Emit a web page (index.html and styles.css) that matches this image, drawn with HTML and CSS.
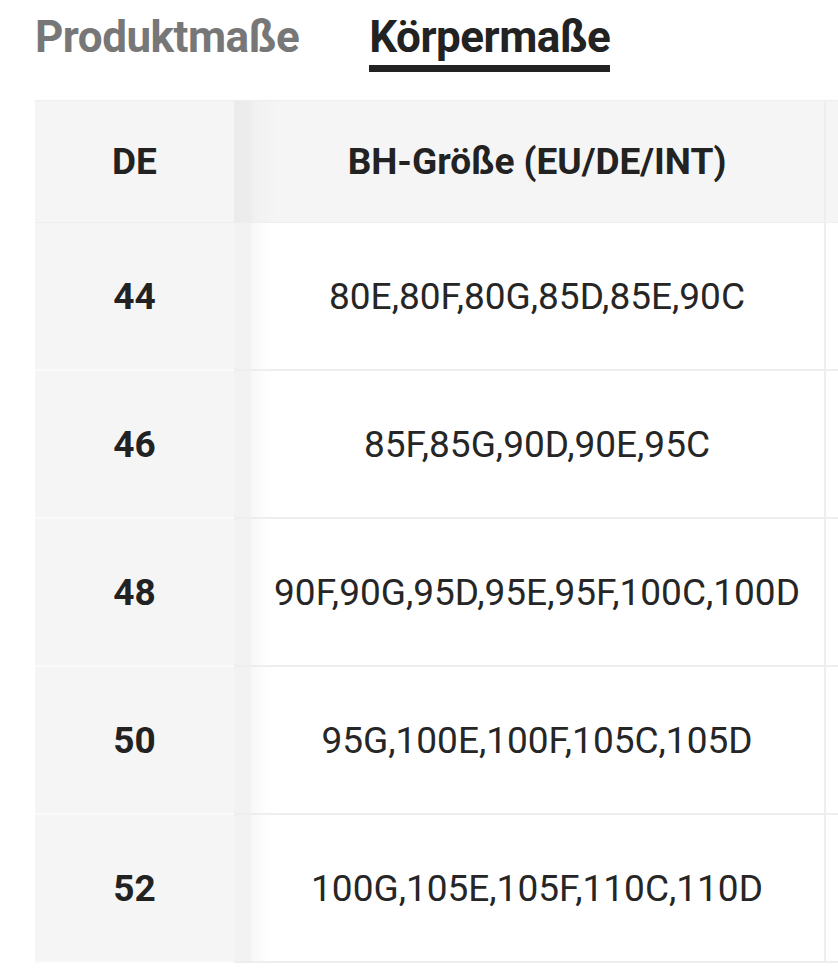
FILE: index.html
```html
<!DOCTYPE html>
<html lang="de">
<head>
<meta charset="utf-8">
<link rel="stylesheet" href="styles.css">
</head>
<body>
<div class="tabs">
  <div class="tab">Produktmaße</div>
  <div class="tab active">Körpermaße</div>
</div>
<div class="table">
  <div class="row head">
    <div class="c1">DE</div>
    <div class="c2">BH-Größe (EU/DE/INT)</div>
    <div class="c3"></div>
  </div>
  <div class="row">
    <div class="c1">44</div>
    <div class="c2">80E,80F,80G,85D,85E,90C</div>
    <div class="c3"></div>
  </div>
  <div class="row">
    <div class="c1">46</div>
    <div class="c2">85F,85G,90D,90E,95C</div>
    <div class="c3"></div>
  </div>
  <div class="row">
    <div class="c1">48</div>
    <div class="c2">90F,90G,95D,95E,95F,100C,100D</div>
    <div class="c3"></div>
  </div>
  <div class="row">
    <div class="c1">50</div>
    <div class="c2">95G,100E,100F,105C,105D</div>
    <div class="c3"></div>
  </div>
  <div class="row">
    <div class="c1">52</div>
    <div class="c2">100G,105E,105F,110C,110D</div>
    <div class="c3"></div>
  </div>
</div>
</body>
</html>
```
FILE: styles.css
```css
html, body {
  margin: 0;
  padding: 0;
  background: #fff;
  overflow: hidden;
}
body {
  font-family: Roboto, "Liberation Sans", sans-serif;
  color: #222;
}
.tabs {
  display: flex;
  gap: 70px;
  padding-left: 35px;
  height: 100px;
}
.tab {
  font-weight: 700;
  font-size: 44px;
  line-height: 60px;
  padding-top: 7px;
  height: 60px;
  color: #777;
  letter-spacing: -0.5px;
}
.tab.active {
  color: #222;
  box-sizing: border-box;
  border-bottom: 7px solid #222;
  height: 72px;
}
.table {
  margin-left: 35px;
  width: calc(100% - 35px);
  overflow: hidden;
  border-top: 1px solid #eee;
}
.row {
  display: grid;
  grid-template-columns: 199px 592px 110px;
  height: 148px;
  font-size: 37px;
}
.row.head {
  height: 122px;
  font-weight: 700;
}
.row > div {
  display: flex;
  align-items: center;
  justify-content: center;
  white-space: nowrap;
}
.c1 {
  background: #f5f5f5;
  font-weight: 700;
  border-bottom: 2px solid #fafafa;
}
.c2 {
  padding-left: 16px;
  color: #262626;
  background: linear-gradient(to right, #f2f2f2 0, #f2f2f2 16px, #f8f8f8 18px, #fdfdfd 30px, #fff 42px);
  border-bottom: 2px solid #eee;
  border-right: 2px solid #eee;
}
.c3 {
  background: #fff;
  border-bottom: 2px solid #eee;
}
.head .c1 {
  background: #f5f5f5;
  border-bottom: 1px solid #eee;
}
.head .c2 {
  color: #222;
  background: linear-gradient(to right, #ebebeb 0, #ececec 16px, #f1f1f1 20px, #f5f5f5 45px);
  border-bottom: 1px solid #eee;
}
.head .c3 {
  background: #f5f5f5;
  border-bottom: 1px solid #eee;
}
```
